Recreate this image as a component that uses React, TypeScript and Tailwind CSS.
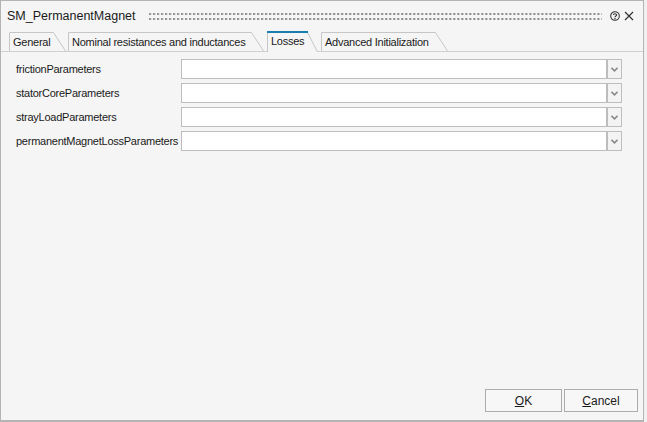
import React from "react";

function Tab({
  w,
  label,
  active,
  cls,
}: {
  w: number;
  label: string;
  active?: boolean;
  cls: string;
}) {
  const h = active ? 21 : 19;
  const slant = active ? 10 : 12;
  return (
    <div className={`relative shrink-0 ${cls}`}>
      <svg
        className="absolute inset-0"
        width={w}
        height={h}
        viewBox={`0 0 ${w} ${h}`}
      >
        <path
          d={`M0.5 ${h} V${active ? 1.5 : 0.5} H${w - slant - 0.5} L${w - 0.5} ${h}`}
          fill="#f5f5f5"
          stroke="#c6c6c6"
          strokeWidth="1"
        />
        {active && <rect x="0" y="0" width={w - slant} height="2" fill="#1a7db0" />}
      </svg>
      <span className="relative block pl-[4px] text-[11px] tracking-[-0.25px] leading-[20px] text-[#1a1a1a] whitespace-nowrap">
        {label}
      </span>
    </div>
  );
}

function Row({ label }: { label: string }) {
  return (
    <div className="flex items-center h-[20px]">
      <div className="w-[165px] text-[11px] tracking-[-0.25px] text-[#1a1a1a] whitespace-nowrap">
        {label}
      </div>
      <div className="w-[426px] h-[20px] bg-white border border-[#bdbdbd]" />
      <div className="w-[15px] h-[20px] border border-[#bdbdbd] bg-[#f3f3f3] flex items-center justify-center">
        <svg width="7" height="5" viewBox="0 0 7 5">
          <path d="M0.5 0.8 L3.5 3.8 L6.5 0.8" fill="none" stroke="#8a8a8a" strokeWidth="1.6" />
        </svg>
      </div>
    </div>
  );
}

export default function App() {
  return (
    <div className="w-[647px] h-[422px] bg-[#f0f0f0] font-['Liberation_Sans',Arial,sans-serif]">
      <div className="w-[644px] h-[422px] bg-[#f5f5f5] border border-[#b4b4b4] border-b-2 flex flex-col">
        {/* Title bar */}
        <div className="h-[30px] flex items-center pl-[6px] pr-[9px] shrink-0">
          <div className="text-[12.5px] text-[#1a1a1a] whitespace-nowrap">SM_PermanentMagnet</div>
          <svg className="ml-[13px] flex-1" height="7" viewBox="0 0 453 7" preserveAspectRatio="none">
            <defs>
              <pattern id="grip" x="0" y="0" width="4" height="5" patternUnits="userSpaceOnUse">
                <rect x="0" y="0" width="2" height="2" fill="#8e8e8e" />
              </pattern>
            </defs>
            <rect x="0" y="0" width="453" height="7" fill="url(#grip)" />
          </svg>
          <svg className="ml-[8px]" width="10" height="10" viewBox="0 0 10 10">
            <circle cx="5" cy="5" r="4.3" fill="none" stroke="#333" strokeWidth="1.1" />
            <path d="M3.4 4 C3.4 2.4 6.6 2.4 6.6 4 C6.6 5 5 5 5 6.2" fill="none" stroke="#333" strokeWidth="1.1" />
            <rect x="4.4" y="7" width="1.2" height="1.2" fill="#333" />
          </svg>
          <svg className="ml-[4px]" width="10" height="10" viewBox="0 0 10 10">
            <path d="M1 1 L9 9 M9 1 L1 9" stroke="#333" strokeWidth="1.2" />
          </svg>
        </div>

        {/* Tabs */}
        <div className="h-[21px] flex items-end pl-[8px] border-b border-[#cfcfcf] shrink-0">
          <Tab w={57} label="General" cls="w-[57px] h-[19px]" />
          <Tab w={196} label="Nominal resistances and inductances" cls="w-[196px] h-[19px] ml-[2px]" />
          <Tab w={51} label="Losses" active cls="w-[51px] h-[21px] -mb-px ml-[3px] z-10" />
          <Tab w={127} label="Advanced Initialization" cls="w-[127px] h-[19px] ml-[3px]" />
        </div>

        {/* Content */}
        <div className="flex flex-col gap-[4px] pt-[7px] pl-[15px]">
          <Row label="frictionParameters" />
          <Row label="statorCoreParameters" />
          <Row label="strayLoadParameters" />
          <Row label="permanentMagnetLossParameters" />
        </div>

        <div className="flex-1" />

        {/* Footer */}
        <div className="flex justify-end gap-[2px] pr-[5px] pb-[8px] shrink-0">
          <button className="w-[77px] h-[23px] bg-[#f7f7f7] border border-[#acacac] text-[12px] text-[#1a1a1a]">
            <span className="underline">O</span>K
          </button>
          <button className="w-[74px] h-[23px] bg-[#f7f7f7] border border-[#acacac] text-[12px] text-[#1a1a1a]">
            <span className="underline">C</span>ancel
          </button>
        </div>
      </div>
    </div>
  );
}
